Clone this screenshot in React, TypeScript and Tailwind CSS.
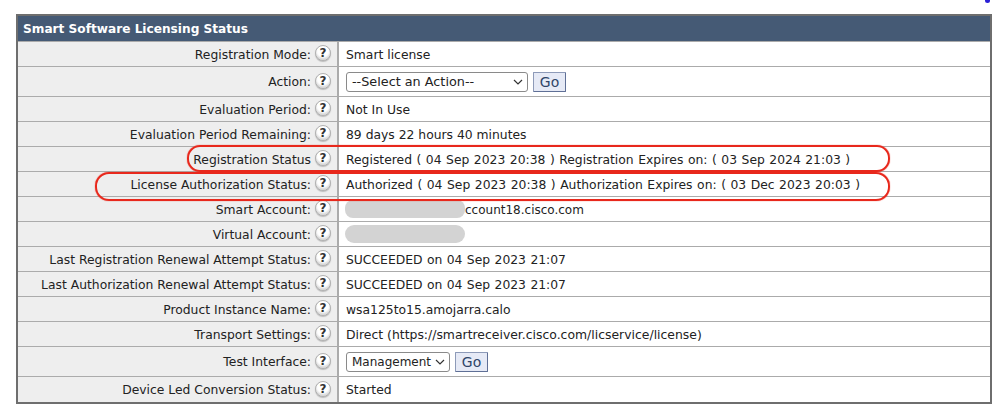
import React from "react";

function Help() {
  return (
    <span className="ml-[4px] flex h-[16px] w-[16px] shrink-0 -translate-y-[1px] items-center justify-center rounded-full border border-[#b0b0b0] bg-white text-[12px] font-bold leading-none text-[#333] shadow-[inset_0_-2px_2px_#d8d8d8,0_1px_1px_#bdbdbd]">
      ?
    </span>
  );
}

function Go() {
  return (
    <button className="ml-[5px] h-[20px] w-[33px] rounded-[1px] border border-[#8d9ab8] border-r-[#5f6f96] border-b-[#5f6f96] bg-[#e6eaf6] text-[14px] leading-none text-[#2f4468]">
      Go
    </button>
  );
}

function Sel({ w, text, size }: { w: string; text: string; size: string }) {
  return (
    <span className={`flex h-[20px] ${w} ${size} items-center justify-between rounded-[3px] border border-[#8a8a8a] bg-white pl-[5px] pr-[4px] text-[#222]`}>
      {text}
      <svg width="10" height="6" viewBox="0 0 10 6" fill="none" stroke="#333" strokeWidth="1.2">
        <path d="M1 1l4 4 4-4" />
      </svg>
    </span>
  );
}

const data: [string, string, React.ReactNode][] = [
  ["Registration Mode:", "h-[25px]", <span className="translate-y-[1px]">Smart license</span>],
  ["Action:", "h-[30px]", <span className="flex items-center"><Sel w="w-[182px]" size="text-[12.8px]" text="--Select an Action--" /><Go /></span>],
  ["Evaluation Period:", "h-[25px]", <span className="translate-y-[1px]">Not In Use</span>],
  ["Evaluation Period Remaining:", "h-[25px]", <span className="translate-y-[1px]">89 days 22 hours 40 minutes</span>],
  ["Registration Status", "h-[25px]", <span className="translate-y-[1px] [word-spacing:0.6px]">Registered ( 04 Sep 2023 20:38 ) Registration Expires on: ( 03 Sep 2024 21:03 )</span>],
  ["License Authorization Status:", "h-[25px]", <span className="translate-y-[1px] [word-spacing:0.6px]">Authorized ( 04 Sep 2023 20:38 ) Authorization Expires on: ( 03 Dec 2023 20:03 )</span>],
  ["Smart Account:", "h-[25px]", <span className="flex items-center"><span className="-ml-[1px] h-[18px] w-[120px] shrink-0 rounded-[8px] bg-[#d3d3d3]" /><span className="translate-y-[1px] text-[12px]">ccount18.cisco.com</span></span>],
  ["Virtual Account:", "h-[25px]", <span className="-ml-[1px] block h-[18px] w-[120px] rounded-[9px] bg-[#d3d3d3]" />],
  ["Last Registration Renewal Attempt Status:", "h-[25px]", <span className="translate-y-[1px] [word-spacing:0.5px]">SUCCEEDED on 04 Sep 2023 21:07</span>],
  ["Last Authorization Renewal Attempt Status:", "h-[25px]", <span className="translate-y-[1px] [word-spacing:0.5px]">SUCCEEDED on 04 Sep 2023 21:07</span>],
  ["Product Instance Name:", "h-[25px]", <span className="translate-y-[1px]">wsa125to15.amojarra.calo</span>],
  ["Transport Settings:", "h-[25px]", <span className="translate-y-[1px] text-[12.42px]">Direct (https://smartreceiver.cisco.com/licservice/license)</span>],
  ["Test Interface:", "h-[30px]", <span className="flex items-center"><Sel w="w-[104px]" size="text-[12px]" text="Management" /><Go /></span>],
  ["Device Led Conversion Status:", "h-[26px]", <span className="translate-y-[1px]">Started</span>],
];

export default function App() {
  return (
    <div className="relative h-[411px] w-[998px] overflow-hidden bg-white pl-[16px] pt-[14px] font-['DejaVu_Sans',Verdana,sans-serif] text-[12.35px] text-[#222]">
      <div className="w-[976px] border-2 border-[#6e6e6e]">
        <div className="flex h-[25px] items-center bg-[#455a75] pl-[5px] pt-[1px] text-[12.15px] font-bold text-white">
          Smart Software Licensing Status
        </div>
        {data.map(([label, h, value]) => (
          <div key={label} className={`flex ${h} border-t border-[#ababab]`}>
            <div className="flex w-[321px] shrink-0 items-center justify-end border-r-2 border-[#ababab] bg-[#eeeeee] pr-[6px]">
              <span className="translate-y-[1px] whitespace-nowrap">{label}</span>
              <Help />
            </div>
            <div className="flex flex-1 items-center whitespace-nowrap bg-white pl-[7px]">{value}</div>
          </div>
        ))}
      </div>
      <div className="absolute left-[187px] top-[145px] h-[27px] w-[703px] rounded-[13px] border-2 border-[#e8281c] shadow-[0_0_1px_#e8281c]" />
      <div className="absolute left-[95px] top-[172px] h-[29px] w-[795px] rounded-[14px] border-2 border-[#e8281c] shadow-[0_0_1px_#e8281c]" />
      <div className="absolute left-[985px] top-0 h-[3px] w-[5px] rounded-b-full bg-[#2a1fd6]" />
    </div>
  );
}
